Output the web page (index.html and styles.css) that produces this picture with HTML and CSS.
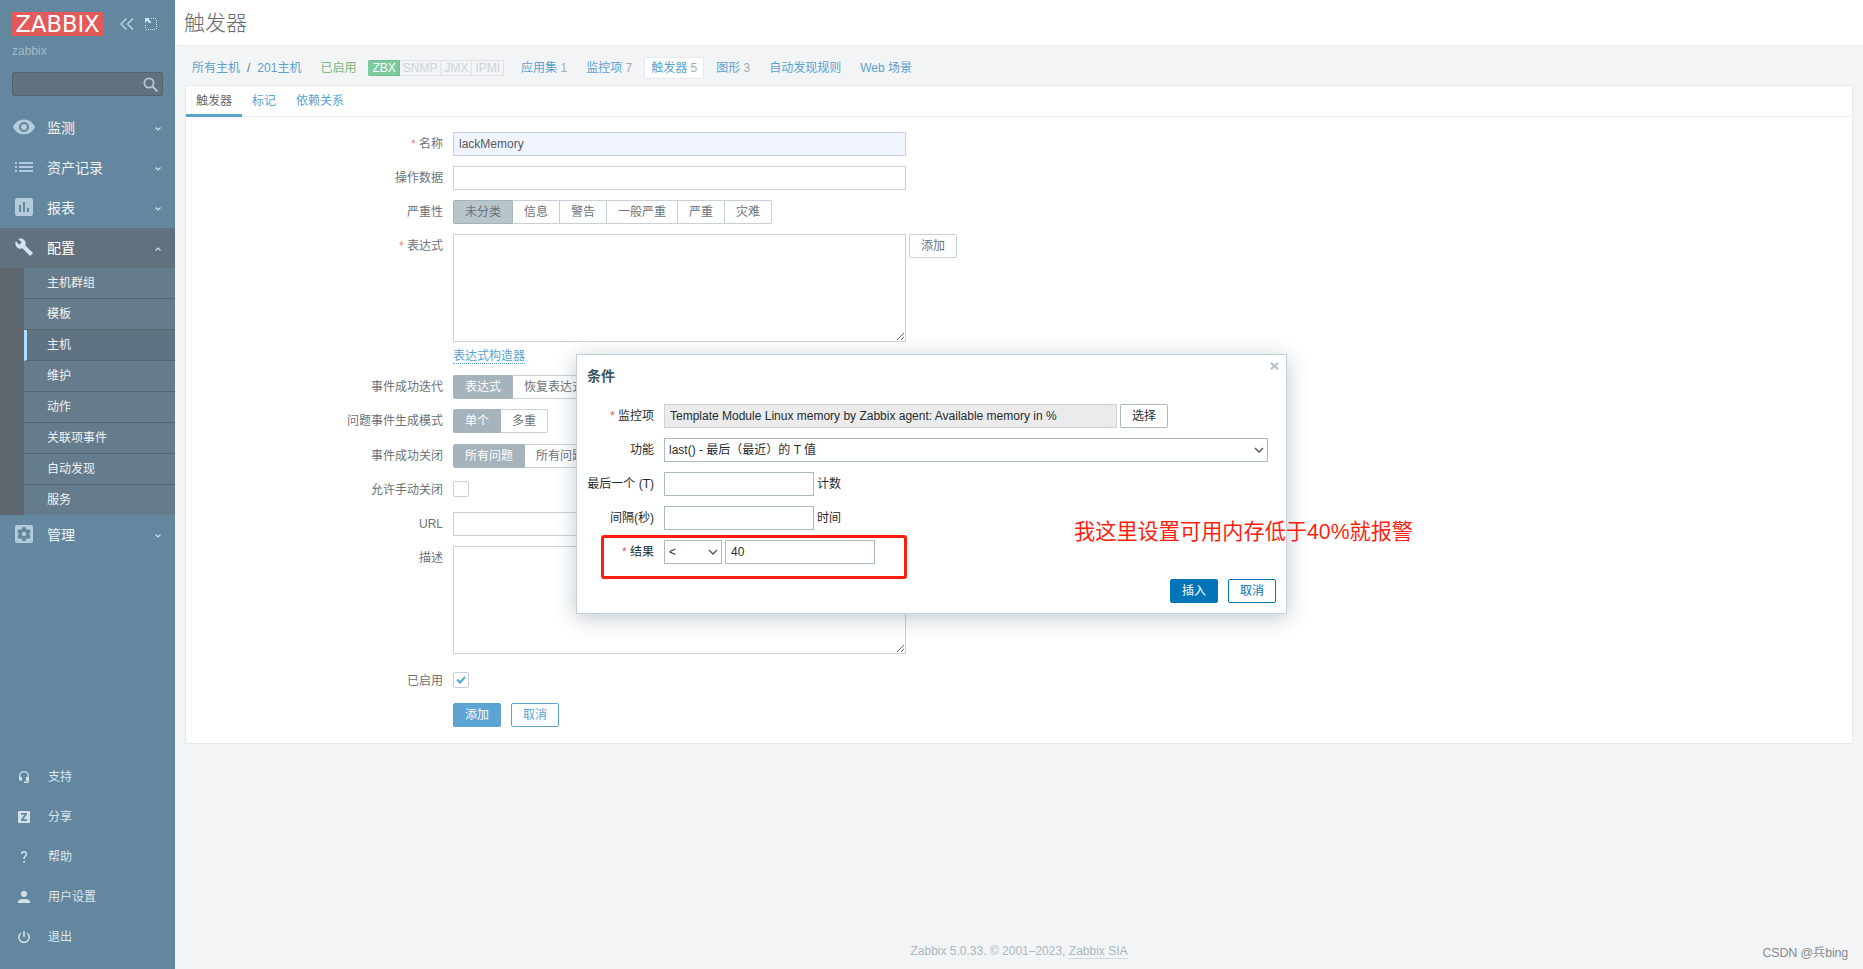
FILE: index.html
```
<!DOCTYPE html>
<html lang="zh-CN">
<head>
    <meta charset="UTF-8">
    <meta name="viewport" content="width=device-width, initial-scale=1.0">
    <title>触发器</title>
    <link rel="stylesheet" href="styles.css">
</head>
<body>

    <!-- Sidebar -->
    <aside class="sidebar">
        <div class="sidebar-header">
            <div class="logo">ZABBIX</div>
            <svg class="icon-collapse" width="14" height="12" viewBox="0 0 14 12"><path d="M6.5 0.5L1 6l5.500 5.500M13 0.5L7.500 6l5.500 5.500"/></svg>
            <svg class="icon-kiosk" width="12" height="12" viewBox="0 0 12 12"><path class="dots" d="M6 .5h6M11.500 2v10M10 11.500H0M.5 10V6"/><path class="arrow" d="M0 0h5L3.700 1.500 6.300 4.200 4.800 5.600 2 3 0 5z"/></svg>
        </div>
        <div class="server-name">zabbix</div>
        <div class="search">
            <svg width="16" height="16" viewBox="0 0 16 16"><circle cx="6" cy="6" r="4.600"/><path d="M9.500 9.500l5 5"/></svg>
        </div>

        <ul class="menu-main">
            <li>
                <a class="menu-item">
                    <svg width="24" height="24" viewBox="0 0 24 24"><path d="M12 4.500C7 4.500 2.700 7.600 1 12c1.700 4.400 6 7.500 11 7.500s9.300-3.100 11-7.500C21.300 7.600 17 4.500 12 4.500zM12 17a5 5 0 1 1 0-10 5 5 0 0 1 0 10zm0-8a3 3 0 1 0 0 6 3 3 0 0 0 0-6z"/></svg>
                    <span>监测</span>
                    <svg class="chevron" width="8" height="6" viewBox="0 0 8 6"><path d="M1.500 1.500L4 4l2.500-2.500"/></svg>
                </a>
            </li>
            <li>
                <a class="menu-item">
                    <svg width="24" height="24" viewBox="0 0 24 24"><path d="M3 7h2v2H3zm4 0h14v2H7zm-4 4h2v2H3zm4 0h14v2H7zm-4 4h2v2H3zm4 0h14v2H7z"/></svg>
                    <span>资产记录</span>
                    <svg class="chevron" width="8" height="6" viewBox="0 0 8 6"><path d="M1.500 1.500L4 4l2.500-2.500"/></svg>
                </a>
            </li>
            <li>
                <a class="menu-item">
                    <svg width="24" height="24" viewBox="0 0 24 24"><path d="M19 3H5a2 2 0 0 0-2 2v14c0 1.100.9 2 2 2h14a2 2 0 0 0 2-2V5a2 2 0 0 0-2-2zM9 17H7v-7h2zm4 0h-2V7h2zm4 0h-2v-4h2z"/></svg>
                    <span>报表</span>
                    <svg class="chevron" width="8" height="6" viewBox="0 0 8 6"><path d="M1.500 1.500L4 4l2.500-2.500"/></svg>
                </a>
            </li>
            <li class="is-expanded">
                <a class="menu-item">
                    <svg width="24" height="24" viewBox="0 0 24 24"><path transform="translate(2.600 2.600) scale(.79)" d="M22.700 19l-9.100-9.100c.9-2.300.4-5-1.500-6.900-2-2-5-2.400-7.400-1.300L9 6 6 9 1.600 4.700C.4 7.100.9 10.100 2.900 12.100c1.900 1.900 4.600 2.400 6.900 1.500l9.100 9.100c.4.4 1 .4 1.400 0l2.300-2.300c.5-.4.5-1.100.1-1.400z"/></svg>
                    <span>配置</span>
                    <svg class="chevron" width="8" height="6" viewBox="0 0 8 6"><path d="M1.500 4.500L4 2l2.500 2.500"/></svg>
                </a>
                <ul class="submenu">
                    <li>主机群组</li>
                    <li>模板</li>
                    <li class="is-selected">主机</li>
                    <li>维护</li>
                    <li>动作</li>
                    <li>关联项事件</li>
                    <li>自动发现</li>
                    <li>服务</li>
                </ul>
            </li>
            <li>
                <a class="menu-item">
                    <svg width="24" height="24" viewBox="0 0 24 24"><path fill-rule="evenodd" d="M5 3h14a2 2 0 0 1 2 2v14a2 2 0 0 1-2 2H5a2 2 0 0 1-2-2V5a2 2 0 0 1 2-2zM10.500 5l-.5 2-1.200.7-2-.6-1.500 2.600 1.500 1.500v1.600l-1.500 1.500 1.500 2.600 2-.6 1.200.7.5 2h3l.5-2 1.200-.7 2 .6 1.500-2.600-1.500-1.500v-1.600l1.500-1.500-1.500-2.600-2 .6L14 7l-.5-2zM12 9.800a2.200 2.200 0 1 1 0 4.400 2.200 2.200 0 0 1 0-4.400z"/></svg>
                    <span>管理</span>
                    <svg class="chevron" width="8" height="6" viewBox="0 0 8 6"><path d="M1.500 1.500L4 4l2.500-2.500"/></svg>
                </a>
            </li>
        </ul>

        <ul class="menu-user">
            <li>
                <svg width="12" height="12" viewBox="0 0 12 12"><path d="M6 0a5 5 0 0 0-5 5v3c0 1 .7 1.800 1.600 1.800H4V6H2.300V5a3.700 3.700 0 0 1 7.400 0v1H8v3.800h1.700v.7H6V12h3.400c.9 0 1.600-.8 1.600-1.700V5a5 5 0 0 0-5-5z"/></svg>
                支持
            </li>
            <li>
                <svg width="12" height="12" viewBox="0 0 12 12"><path fill-rule="evenodd" d="M1 0h10a1 1 0 0 1 1 1v10a1 1 0 0 1-1 1H1a1 1 0 0 1-1-1V1a1 1 0 0 1 1-1zM3 2v1.700h3.600L2.900 8.600V10h6.200V8.300H5.300L9 3.500V2z"/></svg>
                分享
            </li>
            <li>
                <svg width="12" height="12" viewBox="0 0 12 12"><path class="stroke" d="M3.600 3C3.700 1.600 4.700.8 6 .8s2.400.8 2.400 2.200c0 2-2.400 2.200-2.400 5"/><path d="M5.200 10h1.700v1.800H5.200z"/></svg>
                帮助
            </li>
            <li>
                <svg width="12" height="12" viewBox="0 0 12 12"><circle cx="6" cy="3" r="3"/><path d="M0 12v-1.500C0 8.800 3 8 6 8s6 .8 6 2.500V12z"/></svg>
                用户设置
            </li>
            <li>
                <svg width="12" height="12" viewBox="0 0 12 12"><path class="stroke" d="M2.600 2.200a5.200 5.200 0 1 0 6.800 0"/><path d="M5.200 0h1.600v6H5.200z"/></svg>
                退出
            </li>
        </ul>
    </aside>

    <!-- Page content -->
    <div class="wrapper">
        <header class="page-header">
            <h1>触发器</h1>
        </header>

        <nav class="host-nav">
            <a class="host-all">所有主机</a>
            <span class="slash">/</span>
            <a class="host-name">201主机</a>
            <span class="status-enabled">已启用</span>
            <div class="interfaces">
                <span class="on">ZBX</span><span>SNMP</span><span>JMX</span><span>IPMI</span>
            </div>
            <a class="nav-link">应用集 <sup>1</sup></a>
            <a class="nav-link">监控项 <sup>7</sup></a>
            <a class="nav-link selected">触发器 <sup>5</sup></a>
            <a class="nav-link">图形 <sup>3</sup></a>
            <a class="nav-link">自动发现规则</a>
            <a class="nav-link">Web 场景</a>
        </nav>

        <main class="panel">
            <div class="tabs">
                <a class="tab active">触发器</a>
                <a class="tab">标记</a>
                <a class="tab">依赖关系</a>
            </div>

            <form class="trigger-form">
                <label class="required">名称</label>
                <div><input class="autofill wide" type="text" value="lackMemory"></div>

                <label>操作数据</label>
                <div><input class="wide" type="text"></div>

                <label>严重性</label>
                <div class="segmented severity">
                    <span class="checked">未分类</span><span>信息</span><span>警告</span><span>一般严重</span><span>严重</span><span>灾难</span>
                </div>

                <label class="required">表达式</label>
                <div class="with-button">
                    <textarea class="wide"></textarea>
                    <button type="button" class="btn-grey">添加</button>
                </div>

                <div class="link-row"><a class="link-action">表达式构造器</a></div>

                <label>事件成功迭代</label>
                <div class="segmented">
                    <span class="checked">表达式</span><span>恢复表达式</span>
                </div>

                <label>问题事件生成模式</label>
                <div class="segmented mode">
                    <span class="checked">单个</span><span>多重</span>
                </div>

                <label>事件成功关闭</label>
                <div class="segmented">
                    <span class="checked">所有问题</span><span>所有问题</span>
                </div>

                <label>允许手动关闭</label>
                <div class="check-row"><span class="checkbox"></span></div>

                <label>URL</label>
                <div><input class="wide" type="text"></div>

                <label>描述</label>
                <div><textarea class="wide"></textarea></div>

                <label class="enabled-label">已启用</label>
                <div class="check-row enabled-row">
                    <span class="checkbox"><svg width="10" height="8" viewBox="0 0 10 8"><path d="M1 3.500l3 3L9 1"/></svg></span>
                </div>

                <div class="form-buttons">
                    <button type="button" class="btn-main">添加</button>
                    <button type="button" class="btn-alt">取消</button>
                </div>
            </form>
        </main>

        <footer>Zabbix 5.0.33. © 2001–2023, <a>Zabbix SIA</a></footer>
    </div>

    <!-- Condition dialogue -->
    <div class="overlay-dialogue">
        <svg class="close" width="9" height="8" viewBox="0 0 9 8"><path d="M1 .8l7 6.400M8 .8L1 7.200"/></svg>
        <h4>条件</h4>
        <form class="condition-form">
            <label class="required">监控项</label>
            <div>
                <input class="wide" type="text" readonly value="Template Module Linux memory by Zabbix agent: Available memory in %">
                <button type="button" class="btn-grey">选择</button>
            </div>

            <label>功能</label>
            <div>
                <span class="select function-select">last() - 最后（最近）的 T 值
                    <svg width="10" height="6" viewBox="0 0 10 6"><path d="M1 1l4 4 4-4"/></svg>
                </span>
            </div>

            <label>最后一个 (T)</label>
            <div><input class="small" type="text"> 计数</div>

            <label>间隔(秒)</label>
            <div><input class="small" type="text"> 时间</div>

            <label class="required">结果</label>
            <div>
                <span class="select operator-select">&lt;
                    <svg width="10" height="6" viewBox="0 0 10 6"><path d="M1 1l4 4 4-4"/></svg>
                </span>
                <input class="small" type="text" value="40">
            </div>
        </form>
        <div class="dialogue-buttons">
            <button type="button" class="btn-main">插入</button>
            <button type="button" class="btn-alt">取消</button>
        </div>
    </div>

    <!-- Notes drawn over the page -->
    <div class="mark-box"></div>
    <div class="mark-text">我这里设置可用内存低于40%就报警</div>
    <div class="watermark">CSDN @兵bing</div>

</body>
</html>
```
FILE: styles.css
```
* {
    box-sizing: border-box;
}
body {
    margin: 0;
    height: 969px;
    display: flex;
    overflow: hidden;
    position: relative;
    background-color: #f2f4f6;
    color: #6b7278;
    font-family: "Liberation Sans", "Noto Sans CJK SC", sans-serif;
    font-size: 12px;
    line-height: 14px;
}
ul {
    list-style: none;
    margin: 0;
    padding: 0;
}
input, textarea, button {
    font-family: inherit;
    font-size: 12px;
    color: inherit;
    margin: 0;
    outline: 0;
}

/* Sidebar */
.sidebar {
    width: 175px;
    flex: none;
    display: flex;
    flex-direction: column;
    background-color: #62879f;
    color: #f0f4f7;
}
.sidebar-header {
    display: flex;
    align-items: center;
    padding: 12px 0 0 12px;
}
.logo {
    width: 91px;
    height: 24px;
    background-color: #e45959;
    color: #fff;
    font: 22.6px/24px "DejaVu Sans", sans-serif;
    text-align: center;
}
.icon-collapse {
    margin-left: 17px;
    fill: none;
    stroke: #c6d8e4;
    stroke-width: 1.3;
}
.icon-kiosk {
    margin-left: 11px;
}
.icon-kiosk .dots {
    fill: none;
    stroke: #d5e1e9;
    stroke-dasharray: 1 1;
}
.icon-kiosk .arrow {
    fill: #d5e1e9;
}
.server-name {
    margin: 8px 0 0 12px;
    color: #a4bac8;
}
.search {
    margin: 14px 12px 12px;
    height: 24px;
    padding: 4px 3px;
    display: flex;
    justify-content: flex-end;
    background-color: #61717d;
    border: 1px solid #56626b;
    border-radius: 2px;
}
.search svg {
    fill: none;
    stroke: #b4c8d5;
    stroke-width: 1.8;
}
.menu-item {
    display: flex;
    align-items: center;
    height: 40px;
    padding: 0 13px 0 12px;
    font-size: 14px;
}
.menu-item svg {
    fill: #b3cbda;
    margin-top: -2px;
}
.menu-item span {
    flex: 1;
    margin-left: 11px;
}
.menu-item .chevron {
    fill: none;
    stroke: #d2dfe8;
    stroke-width: 1.2;
    margin-top: 1px;
}
.is-expanded .menu-item {
    background-color: #61717d;
    color: #fff;
}
.is-expanded .menu-item svg:not(.chevron) {
    fill: #d3e4f0;
}
.submenu {
    border-left: 24px solid #5d676d;
    background-color: #647c8b;
}
.submenu li {
    height: 31px;
    padding-left: 23px;
    line-height: 30px;
    border-bottom: 1px solid #56646e;
}
.submenu li:last-child {
    height: 30px;
    border-bottom: 0;
}
.submenu .is-selected {
    padding-left: 20px;
    border-left: 3px solid #b0deff;
    background-color: #607382;
}
.menu-user {
    margin-top: auto;
    padding-bottom: 12px;
}
.menu-user li {
    display: flex;
    align-items: center;
    gap: 18px;
    height: 40px;
    padding-left: 18px;
    color: #dfe7ec;
}
.menu-user svg {
    fill: #d5e1e9;
}
.menu-user .stroke {
    fill: none;
    stroke: #d5e1e9;
    stroke-width: 1.5;
}

/* Header and host navigation */
.wrapper {
    flex: 1;
    display: flex;
    flex-direction: column;
}
.page-header {
    height: 46px;
    padding-left: 9px;
    background-color: #fff;
    border-bottom: 1px solid #e6eaec;
}
h1 {
    margin: 0;
    font-size: 21px;
    font-weight: 300;
    line-height: 45px;
    color: #666a70;
}
.host-nav {
    display: flex;
    align-items: center;
    height: 39px;
    padding: 4px 0 0 17px;
}
.host-nav a {
    color: #5aa2d0;
}
.slash {
    margin: 0 7px;
}
.status-enabled {
    margin: 0 12px 0 19px;
    color: #7cb87c;
}
.interfaces {
    display: flex;
    margin-right: 10px;
}
.interfaces span {
    height: 16px;
    padding: 0 3px;
    border: 1px solid #dfe4e7;
    border-left-width: 0;
    color: #ccd4d9;
    line-height: 14px;
}
.interfaces .on {
    padding: 0 3px 0 4px;
    background-color: #7bcb9c;
    border-color: #6fbf90;
    border-radius: 2px 0 0 2px;
    color: #fff;
}
.nav-link {
    height: 22px;
    padding: 0 6px;
    margin-right: 5px;
    border: 1px solid transparent;
    line-height: 20px;
    white-space: nowrap;
}
.nav-link.selected {
    background-color: #fff;
    border-color: #e6eaec;
    border-radius: 2px;
}
.nav-link sup {
    font-size: 12px;
    line-height: 1;
    vertical-align: baseline;
    color: #a3adb3;
}

/* Trigger form */
.panel {
    height: 659px;
    margin: 0 10px;
    background-color: #fff;
    border: 1px solid #e6eaec;
}
.tabs {
    display: flex;
    height: 31px;
    border-bottom: 1px solid #eef0f2;
}
.tab {
    height: 31px;
    padding: 0 10px;
    line-height: 31px;
    color: #5aa2d0;
}
.tab.active {
    color: #666a70;
    border-bottom: 3px solid #5aa2d0;
}
.trigger-form {
    display: grid;
    grid-template-columns: 257px 1fr;
    column-gap: 10px;
    row-gap: 10px;
    padding-top: 15px;
}
.trigger-form > div {
    min-height: 24px;
}
label {
    line-height: 24px;
    text-align: right;
    white-space: nowrap;
}
.required::before {
    content: "* ";
    color: #f08080;
}
input, textarea {
    display: block;
    border: 1px solid #c8d1d7;
    border-radius: 0;
    background-color: #fff;
}
input {
    height: 24px;
    padding: 0 5px;
}
textarea {
    height: 108px;
}
.wide {
    width: 453px;
}
.autofill {
    background-color: #eff4fe;
    color: #55595e;
}
.segmented {
    display: flex;
}
.segmented span {
    height: 24px;
    padding: 0 11px;
    border: 1px solid #c8d1d7;
    border-left-width: 0;
    line-height: 22px;
    white-space: nowrap;
}
.segmented span:first-child {
    border-left-width: 1px;
    border-radius: 2px 0 0 2px;
}
.segmented span:last-child {
    border-radius: 0 2px 2px 0;
}
.segmented .checked {
    background-color: #a5b3bc;
    border-color: #a5b3bc;
    color: #fff;
}
.severity .checked {
    background-color: #b8c5cb;
    border-color: #a5b3bc;
    color: #6b7278;
}
.trigger-form .mode {
    min-height: 25px;
}
.with-button {
    display: flex;
    gap: 3px;
}
.trigger-form .link-row {
    grid-column: 2;
    min-height: 13px;
    height: 13px;
    line-height: 9px;
}
.link-action {
    display: inline-block;
    padding-bottom: 2px;
    border-bottom: 1px dotted #5aa2d0;
    color: #5aa2d0;
}
button {
    height: 24px;
    padding: 0 11px;
    border: 1px solid #5aa2d0;
    border-radius: 2px;
    background-color: #fff;
    line-height: 22px;
}
.btn-grey {
    border-color: #c8d1d7;
}
.btn-main {
    background-color: #5ba4d3;
    color: #fff;
}
.btn-alt {
    color: #5aa2d0;
}
.check-row {
    display: flex;
    align-items: flex-start;
    padding-top: 3px;
}
.checkbox {
    display: flex;
    align-items: center;
    justify-content: center;
    width: 16px;
    height: 16px;
    border: 1px solid #c8d1d7;
    border-radius: 2px;
}
.checkbox svg {
    fill: none;
    stroke: #5aa2d0;
    stroke-width: 2;
}
.enabled-label, .enabled-row {
    margin-top: 5px;
}
.form-buttons {
    grid-column: 2;
    display: flex;
    gap: 10px;
}
footer {
    margin-top: auto;
    padding-bottom: 10px;
    text-align: center;
    color: #a9b8c0;
}
footer a {
    display: inline-block;
    border-bottom: 1px solid #cfdade;
}

/* Condition dialogue */
.overlay-dialogue {
    position: absolute;
    left: 576px;
    top: 354px;
    width: 711px;
    height: 260px;
    background-color: #fff;
    border: 1px solid #c5d0d7;
    box-shadow: 0 4px 20px rgba(55, 84, 102, 0.32);
    color: #1f2c33;
}
.close {
    position: absolute;
    top: 7px;
    right: 7px;
    fill: none;
    stroke: #b9c6ce;
    stroke-width: 2.4;
}
h4 {
    margin: 13px 0 20px 10px;
    font-size: 14px;
    line-height: 16px;
    color: #3c5563;
}
.condition-form {
    display: grid;
    grid-template-columns: 77px 1fr;
    row-gap: 10px;
    column-gap: 10px;
}
.condition-form > div {
    display: flex;
    align-items: center;
    gap: 3px;
    height: 24px;
}
.condition-form .required::before {
    color: #e45959;
}
.condition-form input {
    border: 1px solid #acbbc2;
}
.condition-form input[readonly] {
    background-color: #ebebeb;
    border-color: #ccd5d9;
}
.condition-form .btn-grey {
    border-color: #acbbc2;
}
.small {
    width: 150px;
}
.select {
    display: flex;
    align-items: center;
    justify-content: space-between;
    height: 24px;
    padding: 0 3px 0 4px;
    border: 1px solid #acbbc2;
}
.select svg {
    fill: none;
    stroke: #4a5258;
    stroke-width: 1.3;
}
.function-select {
    width: 604px;
}
.operator-select {
    width: 58px;
}
.dialogue-buttons {
    display: flex;
    justify-content: flex-end;
    gap: 10px;
    margin: 15px 10px 0 0;
}
.dialogue-buttons button {
    border-color: #0275b8;
}
.dialogue-buttons .btn-main {
    background-color: #0275b8;
}
.dialogue-buttons .btn-alt {
    color: #0275b8;
}

/* Notes */
.mark-box {
    position: absolute;
    left: 601px;
    top: 535px;
    width: 306px;
    height: 44px;
    border: 3px solid #ff1e10;
    border-radius: 3px;
}
.mark-text {
    position: absolute;
    left: 1074px;
    top: 520px;
    font-size: 21.2px;
    line-height: 24px;
    color: #ff1e10;
    white-space: nowrap;
}
.watermark {
    position: absolute;
    right: 15px;
    bottom: 8px;
    font-size: 12.500px;
    letter-spacing: -0.2px;
    line-height: 16px;
    color: #888c8f;
}
```
